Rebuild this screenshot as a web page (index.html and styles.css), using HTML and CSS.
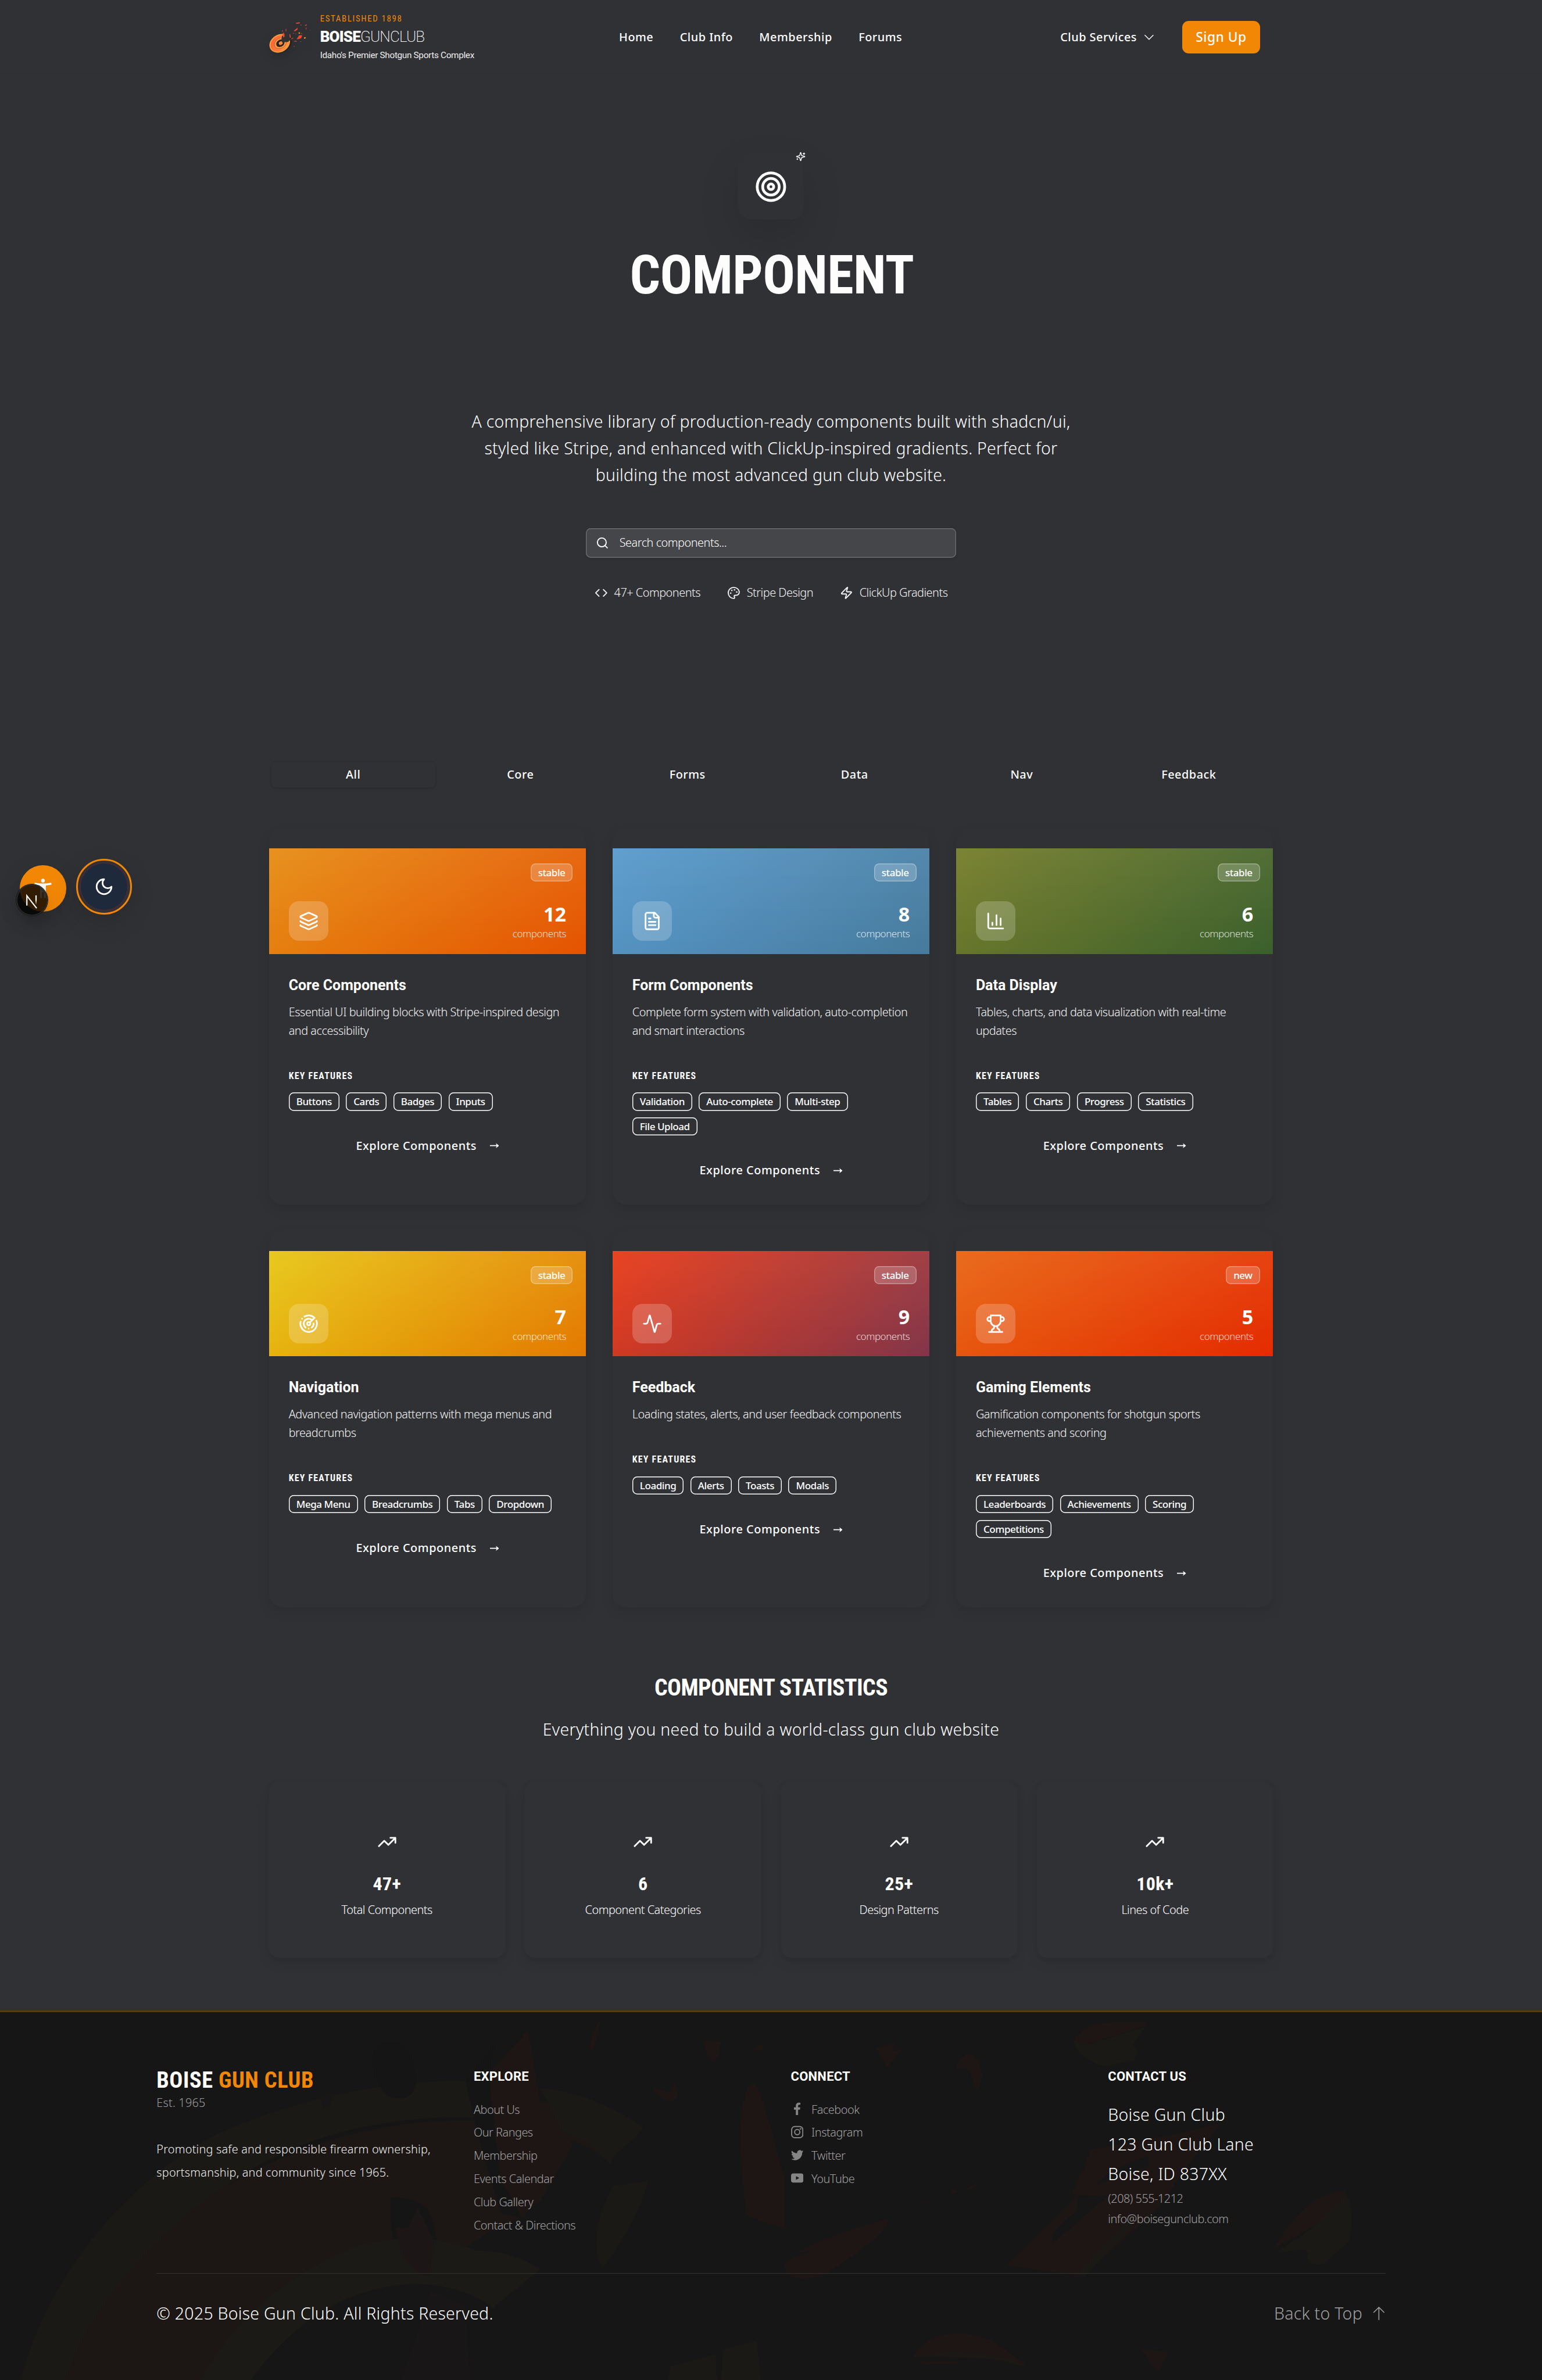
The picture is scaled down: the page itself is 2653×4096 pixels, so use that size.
FILE: index.html
```
<!DOCTYPE html>
<html lang="en">
<head>
<meta charset="utf-8">
<title>Boise Gun Club – Components</title>
<link rel="stylesheet" href="styles.css">
</head>
<body>
<svg class="sprite" aria-hidden="true">
  <symbol id="layers" viewBox="0 0 24 24"><path d="M12.83 2.18a2 2 0 0 0-1.66 0L2.6 6.08a1 1 0 0 0 0 1.83l8.58 3.91a2 2 0 0 0 1.66 0l8.58-3.9a1 1 0 0 0 0-1.83z"/><path d="M2 12a1 1 0 0 0 .58.91l8.6 3.91a2 2 0 0 0 1.65 0l8.58-3.9A1 1 0 0 0 22 12"/><path d="M2 17a1 1 0 0 0 .58.91l8.6 3.91a2 2 0 0 0 1.65 0l8.58-3.9A1 1 0 0 0 22 17"/></symbol>
  <symbol id="file" viewBox="0 0 24 24"><path d="M15 2H6a2 2 0 0 0-2 2v16a2 2 0 0 0 2 2h12a2 2 0 0 0 2-2V7Z"/><path d="M14 2v4a2 2 0 0 0 2 2h4M10 9H8M16 13H8M16 17H8"/></symbol>
  <symbol id="chart" viewBox="0 0 24 24"><path d="M3 3v16a2 2 0 0 0 2 2h16M18 17V9M13 17V5M8 17v-3"/></symbol>
  <symbol id="radar" viewBox="0 0 24 24"><path d="M19.07 4.93A10 10 0 0 0 6.99 3.34M4 6h.01M2.29 9.62A10 10 0 1 0 21.31 8.35M16.24 7.76A6 6 0 1 0 8.23 16.67M12 18h.01M17.99 11.66A6 6 0 0 1 15.77 16.67M13.41 10.59l5.66-5.66"/><circle cx="12" cy="12" r="2"/></symbol>
  <symbol id="activity" viewBox="0 0 24 24"><path d="M22 12h-2.48a2 2 0 0 0-1.93 1.46l-2.35 8.36a.25.25 0 0 1-.48 0L9.24 2.18a.25.25 0 0 0-.48 0l-2.35 8.36A2 2 0 0 1 4.49 12H2"/></symbol>
  <symbol id="trophy" viewBox="0 0 24 24"><path d="M6 9H4.5a2.5 2.5 0 0 1 0-5H6M18 9h1.5a2.5 2.5 0 0 0 0-5H18M4 22h16M10 14.66V17c0 .55-.47.98-.97 1.21C7.85 18.75 7 20.24 7 22M14 14.66V17c0 .55.47.98.97 1.21C16.15 18.75 17 20.24 17 22M18 2H6v7a6 6 0 0 0 12 0V2Z"/></symbol>
  <symbol id="trend" viewBox="0 0 24 24"><path d="M22 7l-8.5 8.5-5-5L2 17M16 7h6v6"/></symbol>
  <symbol id="arrow" viewBox="0 0 11 8"><path d="M0 4h10" fill="none" stroke="currentColor" stroke-width="1.2"/><path d="M7.2 1L11 4 7.2 7l.9-3z" fill="currentColor" stroke="none"/></symbol>
</svg>

<header class="header">
  <div class="container header-row">
    <a class="brand">
      <svg class="brand-mark" viewBox="30 20 300 250">
        <defs><linearGradient id="disc" x1="0" y1="0" x2="1" y2="1"><stop offset="0" stop-color="#ff5f35"/><stop offset=".5" stop-color="#ff7a3c"/><stop offset="1" stop-color="#fba33c"/></linearGradient></defs>
        <g transform="rotate(-32 110 196)">
          <ellipse cx="116" cy="202" rx="80" ry="62" fill="#261f22"/>
          <ellipse cx="108" cy="194" rx="79" ry="63" fill="#f9a13d"/>
          <ellipse cx="109" cy="195" rx="72" ry="56" fill="url(#disc)"/>
          <ellipse cx="112" cy="196" rx="47" ry="36" fill="#fa9a40" stroke="#7b3a22" stroke-width="2"/>
          <ellipse cx="112" cy="196" rx="32" ry="25" fill="#2c2427"/>
          <ellipse cx="115" cy="197" rx="15" ry="12" fill="#f58b3a"/>
        </g>
        <path d="M118 176l44 6 24-10-8-44-20-6-34 20z" fill="#303135"/>
        <path d="M128 180l50-2-12 8-45 2z" fill="#303135"/>
        <g fill="#ee4a30"><path d="M225 46l30-4-4 8-24 4zM289 64l16-7-3 8-10 3zM208 106l28-24v14l-18 11zM295 92l5-11 3 1-5 13zM230 165l18-27 22-2-7 22-22 8zM186 165l18-11 2 5-16 7zM210 178l20 0 2 6-19-2zM178 130l5-2 5 28-8-3zM150 92l4-2 2 15-5 3zM128 124l9-8 6 30-10 8zM124 104l8-4-3 9-5 3zM259 60l5 0 0 6-5-1zM257 180h5v5h-5zM205 120h5v5h-5zM222 124l4 0v5h-4zM209 216l5-2v6h-5zM264 121l5 0 0 5-5 0zM328 98h4v4h-4z"/></g>
        <g fill="#f9a13d"><path d="M242 118l10-2 4 6-8 4zM282 154l12-4 2 7-8 6z"/></g>
      </svg>
      <span class="brand-text">
        <span class="est">ESTABLISHED 1898</span>
        <span class="name"><b>BOISE</b><i>GUNCLUB</i></span>
        <span class="tag">Idaho's Premier Shotgun Sports Complex</span>
      </span>
    </a>
    <nav class="nav"><a>Home</a><a>Club Info</a><a>Membership</a><a>Forums</a></nav>
    <div class="actions">
      <a class="services">Club Services <svg viewBox="0 0 16 16"><path d="M2 5l6 6 6-6"/></svg></a>
      <a class="signup">Sign Up</a>
    </div>
  </div>
</header>

<main>
  <section class="hero">
    <div class="hero-icon">
      <svg class="ico" viewBox="0 0 24 24"><circle cx="12" cy="12" r="10"/><circle cx="12" cy="12" r="6"/><circle cx="12" cy="12" r="2"/></svg>
      <svg class="sparkles" viewBox="0 0 24 24"><path d="M9.937 15.5A2 2 0 0 0 8.5 14.063l-6.135-1.582a.5.5 0 0 1 0-.962L8.5 9.936A2 2 0 0 0 9.937 8.5l1.582-6.135a.5.5 0 0 1 .963 0L14.063 8.5A2 2 0 0 0 15.5 9.937l6.135 1.581a.5.5 0 0 1 0 .964L15.5 14.063a2 2 0 0 0-1.437 1.437l-1.582 6.135a.5.5 0 0 1-.963 0zM20 3v4M22 5h-4M4 17v2M5 18H3"/></svg>
    </div>
    <h1>COMPONENT</h1>
    <p class="lead">A comprehensive library of production-ready components built with shadcn/ui,<br>styled like Stripe, and enhanced with ClickUp-inspired gradients. Perfect for<br>building the most advanced gun club website.</p>
    <div class="search"><svg class="ico" viewBox="0 0 24 24"><circle cx="11" cy="11" r="8"/><path d="M21 21l-4.3-4.3"/></svg><span>Search components...</span></div>
    <ul class="meta">
      <li><svg class="ico" viewBox="0 0 24 24"><path d="M16 18l6-6-6-6M8 6l-6 6 6 6"/></svg>47+ Components</li>
      <li><svg class="ico" viewBox="0 0 24 24"><circle cx="13.5" cy="6.5" r=".5"/><circle cx="17.5" cy="10.5" r=".5"/><circle cx="8.5" cy="7.5" r=".5"/><circle cx="6.5" cy="12.5" r=".5"/><path d="M12 2C6.5 2 2 6.5 2 12s4.5 10 10 10c.926 0 1.648-.746 1.648-1.688 0-.437-.18-.835-.437-1.125-.29-.289-.438-.652-.438-1.125a1.64 1.64 0 0 1 1.668-1.668h1.996c3.051 0 5.555-2.503 5.555-5.554C21.965 6.012 17.461 2 12 2z"/></svg>Stripe Design</li>
      <li><svg class="ico" viewBox="0 0 24 24"><path d="M4 14a1 1 0 0 1-.78-1.63l9.9-10.2a.5.5 0 0 1 .86.46l-1.92 6.02A1 1 0 0 0 13 10h7a1 1 0 0 1 .78 1.63l-9.9 10.2a.5.5 0 0 1-.86-.46l1.92-6.02A1 1 0 0 0 11 14z"/></svg>ClickUp Gradients</li>
    </ul>
  </section>

  <div class="container">
    <nav class="tabs"><a class="active">All</a><a>Core</a><a>Forms</a><a>Data</a><a>Nav</a><a>Feedback</a></nav>

    <section class="cards">
      <article class="card">
        <div class="banner core"><span class="status">stable</span><span class="tile"><svg class="ico"><use href="#layers"/></svg></span><span class="count"><b>12</b>components</span></div>
        <div class="body"><h3>Core Components</h3><p>Essential UI building blocks with Stripe-inspired design<br>and accessibility</p><h4>KEY FEATURES</h4>
        <div class="chips"><span>Buttons</span><span>Cards</span><span>Badges</span><span>Inputs</span></div>
        <a class="explore">Explore Components<svg><use href="#arrow"/></svg></a></div>
      </article>
      <article class="card">
        <div class="banner form"><span class="status">stable</span><span class="tile"><svg class="ico"><use href="#file"/></svg></span><span class="count"><b>8</b>components</span></div>
        <div class="body"><h3>Form Components</h3><p>Complete form system with validation, auto-completion<br>and smart interactions</p><h4>KEY FEATURES</h4>
        <div class="chips"><span>Validation</span><span>Auto-complete</span><span>Multi-step</span><span>File Upload</span></div>
        <a class="explore">Explore Components<svg><use href="#arrow"/></svg></a></div>
      </article>
      <article class="card">
        <div class="banner data"><span class="status">stable</span><span class="tile"><svg class="ico"><use href="#chart"/></svg></span><span class="count"><b>6</b>components</span></div>
        <div class="body"><h3>Data Display</h3><p>Tables, charts, and data visualization with real-time<br>updates</p><h4>KEY FEATURES</h4>
        <div class="chips"><span>Tables</span><span>Charts</span><span>Progress</span><span>Statistics</span></div>
        <a class="explore">Explore Components<svg><use href="#arrow"/></svg></a></div>
      </article>
      <article class="card">
        <div class="banner navi"><span class="status">stable</span><span class="tile"><svg class="ico"><use href="#radar"/></svg></span><span class="count"><b>7</b>components</span></div>
        <div class="body"><h3>Navigation</h3><p>Advanced navigation patterns with mega menus and<br>breadcrumbs</p><h4>KEY FEATURES</h4>
        <div class="chips"><span>Mega Menu</span><span>Breadcrumbs</span><span>Tabs</span><span>Dropdown</span></div>
        <a class="explore">Explore Components<svg><use href="#arrow"/></svg></a></div>
      </article>
      <article class="card">
        <div class="banner feed"><span class="status">stable</span><span class="tile"><svg class="ico"><use href="#activity"/></svg></span><span class="count"><b>9</b>components</span></div>
        <div class="body"><h3>Feedback</h3><p>Loading states, alerts, and user feedback components</p><h4>KEY FEATURES</h4>
        <div class="chips"><span>Loading</span><span>Alerts</span><span>Toasts</span><span>Modals</span></div>
        <a class="explore">Explore Components<svg><use href="#arrow"/></svg></a></div>
      </article>
      <article class="card">
        <div class="banner game"><span class="status">new</span><span class="tile"><svg class="ico"><use href="#trophy"/></svg></span><span class="count"><b>5</b>components</span></div>
        <div class="body"><h3>Gaming Elements</h3><p>Gamification components for shotgun sports<br>achievements and scoring</p><h4>KEY FEATURES</h4>
        <div class="chips"><span>Leaderboards</span><span>Achievements</span><span>Scoring</span><span>Competitions</span></div>
        <a class="explore">Explore Components<svg><use href="#arrow"/></svg></a></div>
      </article>
    </section>

    <section class="stats">
      <h2>COMPONENT STATISTICS</h2>
      <p>Everything you need to build a world-class gun club website</p>
      <div class="stat-grid">
        <div class="stat"><svg class="ico"><use href="#trend"/></svg><b>47+</b><span>Total Components</span></div>
        <div class="stat"><svg class="ico"><use href="#trend"/></svg><b>6</b><span>Component Categories</span></div>
        <div class="stat"><svg class="ico"><use href="#trend"/></svg><b>25+</b><span>Design Patterns</span></div>
        <div class="stat"><svg class="ico"><use href="#trend"/></svg><b>10k+</b><span>Lines of Code</span></div>
      </div>
    </section>
  </div>
</main>

<footer class="footer">
  <svg class="footer-art" viewBox="0 0 3734 891" preserveAspectRatio="xMinYMin slice">
    <g transform="scale(1.2117 .59) translate(0 -56)">
      <path d="M40 1570C90 1180 230 780 430 560C600 400 800 330 930 340L1280 530C1250 600 1220 650 1220 682C1190 620 1150 580 1100 560L1145 600L1080 830L1040 900L975 960L900 1065L1080 1110L985 1268C940 1200 880 1170 820 1172C660 1190 560 1400 500 1570Z" fill="#1e1815"/>
      <path d="M40 1570C90 1180 230 780 430 560C600 400 800 330 930 340L950 490C820 470 640 540 520 680C350 880 190 1200 130 1570Z" fill="#1c1a16"/>
      <path d="M450 775C570 590 740 480 950 488V500C760 492 590 600 450 775ZM780 820C800 810 850 830 858 880C880 980 880 1100 858 1150C830 1160 800 1120 795 1060C780 980 780 900 780 820ZM930 340L990 180L975 300L1000 560L1040 900L1000 880L960 600Z" fill="#151516"/>
      <path d="M400 1570C460 1340 560 1140 720 1010C800 970 900 980 950 1035C1000 1030 1050 1070 1080 1110L985 1268C940 1200 880 1170 820 1172C660 1190 560 1400 500 1570Z" fill="#1d1b16"/>
      <path d="M835 860L868 1000L858 1140C830 1130 800 1080 790 940L815 940Z" fill="#1e1816"/>
      <path d="M1080 368C1160 380 1240 460 1285 530C1265 600 1225 620 1220 682C1190 600 1150 560 1125 548Z" fill="#1d1a16"/>
      <path d="M1055 130L980 300V380L1000 740L1045 905L1145 600L1080 440Z" fill="#211615"/>
      <path d="M745 250C745 150 800 160 822 240L832 330C830 400 810 420 780 405C760 380 745 330 745 250Z" fill="#151516"/>
      <path d="M1407 172L1442 176L1435 235L1425 262L1412 230ZM1500 212L1525 190L1520 214ZM1303 365L1340 385L1348 348L1355 390C1350 440 1325 430 1303 365ZM1478 580C1480 450 1490 350 1505 348C1525 360 1545 600 1568 730V945L1490 890ZM1178 210L1182 150L1200 75L1198 110L1186 205Z" fill="#211615"/>
      <path d="M1340 1510L1430 1460L1432 1570H1336ZM1445 1440L1512 1405L1520 1570H1440ZM1225 770L1295 750C1280 880 1230 1040 1205 1105C1180 1040 1190 900 1225 770Z" fill="#1c1a15"/>
      <path d="M640 400L665 385L660 450L645 450ZM860 1200L930 1260L940 1570H800L830 1400Z" fill="#191616"/>
    </g>
    <g transform="translate(1834 0) scale(1.2117 .59) translate(0 -56)">
      <path d="M0 360C20 500 30 700 55 945L0 910ZM0 190L15 195L5 215H0ZM237 205L275 182L268 220L290 205L260 284ZM398 290C400 230 430 200 442 260C455 310 445 360 438 375C425 330 430 270 398 290ZM75 1050C120 990 210 930 260 905C265 960 170 1090 130 1135C90 1165 50 1150 55 1090C60 1070 80 1055 75 1050ZM925 512L880 630L800 860L650 1140L497 1095L630 830L665 620L830 560ZM624 815L652 690L640 790ZM1032 1027C1060 920 1110 790 1175 792L1165 870ZM310 1475C330 1400 370 1360 430 1380L470 1405L536 1502L470 1480L340 1470ZM325 1490L400 1490L405 1497L330 1502ZM765 1438L822 1450L800 1535ZM328 832L336 825L333 838ZM383 800L398 776V798ZM408 797L440 752L436 775Z" fill="#211615"/>
      <path d="M632 175C650 90 700 95 778 97L770 115L655 190Z" fill="#211615"/>
      <path d="M632 172L655 192L776 115L750 190L760 215L752 255L693 277C660 260 635 220 632 172ZM1040 1040C1070 990 1140 920 1175 800C1190 850 1190 950 1180 1000L1130 1092C1100 1095 1095 1070 1100 1050L1095 1030ZM340 1470C370 1440 420 1450 505 1480L536 1505L525 1507C480 1475 420 1470 340 1470ZM740 910L750 930L655 1140L640 1130Z" fill="#1d1a15"/>
      <path d="M675 770C690 720 740 670 782 645L780 690ZM640 808L700 810L590 1005C580 980 600 930 640 870ZM74 1048L105 1035L100 1045L75 1062Z" fill="#161616"/>
    </g>
  </svg>
  <div class="footer-inner">
    <div class="footer-cols">
      <div>
        <p class="footer-brand">BOISE <em>GUN CLUB</em></p>
        <p class="since">Est. 1965</p>
        <p class="mission">Promoting safe and responsible firearm ownership,<br>sportsmanship, and community since 1965.</p>
      </div>
      <div>
        <h5>EXPLORE</h5>
        <ul class="links"><li>About Us</li><li>Our Ranges</li><li>Membership</li><li>Events Calendar</li><li>Club Gallery</li><li>Contact &amp; Directions</li></ul>
      </div>
      <div>
        <h5>CONNECT</h5>
        <ul class="links social">
          <li><svg viewBox="0 0 16 16"><path d="M6.2 16V9H3.8V6.1h2.4V4C6.2 1.5 7.6 0 10.1 0c1.1 0 1.9.1 1.9.1v2.6h-1.2C9.5 2.7 9.1 3.4 9.1 4.2v1.9h2.8L11.5 9H9.1v7z"/></svg>Facebook</li>
          <li><svg viewBox="0 0 16 16" class="line"><rect x=".8" y=".8" width="14.4" height="14.4" rx="4"/><circle cx="8" cy="8" r="3.4"/><circle cx="12.2" cy="3.8" r=".4"/></svg>Instagram</li>
          <li><svg viewBox="0 0 16 16"><path d="M5.026 15c6.038 0 9.341-5.003 9.341-9.334q.002-.211-.006-.422A6.7 6.7 0 0 0 16 3.542a6.7 6.7 0 0 1-1.889.518 3.3 3.3 0 0 0 1.447-1.817 6.5 6.5 0 0 1-2.087.793A3.286 3.286 0 0 0 7.875 6.03a9.32 9.32 0 0 1-6.767-3.429 3.29 3.29 0 0 0 1.018 4.382A3.3 3.3 0 0 1 .64 6.575v.045a3.29 3.29 0 0 0 2.632 3.218 3.2 3.2 0 0 1-.865.115 3 3 0 0 1-.614-.057 3.28 3.28 0 0 0 3.067 2.277A6.6 6.6 0 0 1 .78 13.58a6 6 0 0 1-.78-.045A9.34 9.34 0 0 0 5.026 15"/></svg>Twitter</li>
          <li><svg viewBox="0 0 16 16"><path fill-rule="evenodd" d="M3 2h10a3 3 0 0 1 3 3v6a3 3 0 0 1-3 3H3a3 3 0 0 1-3-3V5a3 3 0 0 1 3-3zm3.4 3.6v4.8L10.6 8z"/></svg>YouTube</li>
        </ul>
      </div>
      <div class="contact">
        <h5>CONTACT US</h5>
        <address>Boise Gun Club<br>123 Gun Club Lane<br>Boise, ID 837XX</address>
        <p>(208) 555-1212</p>
        <p>info@boisegunclub.com</p>
      </div>
    </div>
    <div class="footer-bottom">
      <p>© 2025 Boise Gun Club. All Rights Reserved.</p>
      <a>Back to Top <svg viewBox="0 0 16 16"><path d="M8 16V1M1.5 7L8 .7 14.5 7"/></svg></a>
    </div>
  </div>
</footer>

<div class="float access"><svg viewBox="0 0 24 24"><path d="M20.5 6c-2.61.7-5.67 1-8.5 1s-5.89-.3-8.5-1L3 8c1.86.5 4 .83 6 1v13h2v-6h2v6h2V9c2-.17 4.14-.5 6-1l-.5-2zM12 6c1.1 0 2-.9 2-2s-.9-2-2-2-2 .9-2 2 .9 2 2 2z"/></svg></div>
<div class="float dark"><span><svg class="ico" viewBox="0 0 24 24"><path d="M12 3a6 6 0 0 0 9 9 9 9 0 1 1-9-9Z"/></svg></span></div>
<div class="float dev"><svg viewBox="0 0 40 40"><defs><linearGradient id="fade" x1="0" y1="0" x2="0" y2="1"><stop offset=".5" stop-color="#fff"/><stop offset="1" stop-color="#fff" stop-opacity="0"/></linearGradient></defs><path d="M13.5 27V14.5L26 30.5" fill="none" stroke="#fff" stroke-width="1.6"/><path d="M24.4 14h1.6v12h-1.6z" fill="url(#fade)"/></svg></div>
</body>
</html>
```
FILE: styles.css
```
/* 1rem equals ten layout units */
html { font-size: 14.21px; }
* { box-sizing: border-box; margin: 0; padding: 0; }
body {
  position: relative;
  height: 4096px;
  overflow: hidden;
  display: flex;
  flex-direction: column;
  background: #303135;
  color: #fff;
  font: 300 1.4rem/2.2rem "Noto Sans", sans-serif;
  letter-spacing: -.025em;
}
ul { list-style: none; }
.sprite { display: none; }
.ico { fill: none; stroke: currentColor; stroke-width: 2; stroke-linecap: round; stroke-linejoin: round; }
.container { width: 121.6rem; margin: 0 auto; }
h1, h2, h3, h4, h5, .footer-brand, .stat b, .brand-text { font-family: Roboto, sans-serif; font-weight: 700; }

/* header */
.header { height: 9rem; flex: none; border-bottom: 1px solid #2e2f32; }
.header-row { height: 9rem; display: flex; align-items: center; padding-right: 1.6rem; font-weight: 500; letter-spacing: .025em; }
.brand { width: 42.4rem; display: flex; align-items: center; gap: 1.2rem; }
.brand-mark { width: 5rem; height: 4.17rem; flex: none; margin-top: -.15rem; filter: drop-shadow(0 .5rem .6rem rgba(0, 0, 0, .15)); }
.brand-text { display: flex; flex-direction: column; white-space: nowrap; }
.est { font-size: 1.05rem; line-height: 1.6rem; font-weight: 400; font-stretch: 75%; letter-spacing: .11em; color: #f28705; }
.name { font-size: 1.83rem; line-height: 2.8rem; letter-spacing: -.032em; }
.name i { font-style: normal; font-weight: 200; }
.tag { font-size: 1.08rem; line-height: 1.6rem; font-weight: 400; letter-spacing: -.0215em; color: #eee; }
.nav { display: flex; gap: 3.2rem; }
.actions { margin-left: auto; display: flex; align-items: center; gap: 3.3rem; }
.services { display: flex; align-items: center; gap: .8rem; }
.services svg { width: 1.4rem; height: 1.4rem; fill: none; stroke: #fff; stroke-width: 1.1; }
.signup { width: 9.4rem; height: 4rem; border-radius: .8rem; background: #f28705; font-size: 1.6rem; line-height: 4rem; text-align: center; }

/* hero */
.hero { display: flex; flex-direction: column; align-items: center; padding-top: 9.6rem; text-align: center; }
.hero-icon { position: relative; width: 8rem; height: 8rem; border-radius: 1.6rem; display: flex; align-items: center; justify-content: center; background: #303135; box-shadow: 0 2rem 5rem rgba(0, 0, 0, .12); }
.hero-icon .ico { width: 4rem; height: 4rem; }
.sparkles { position: absolute; top: -.2rem; right: -.2rem; width: 1.2rem; height: 1.2rem; fill: none; stroke: #fff; stroke-width: 2; stroke-linecap: round; }
h1 { margin-top: 2.86rem; padding-left: .2rem; font-size: 6.51rem; line-height: 7.8rem; font-stretch: 75%; letter-spacing: -.007em; color: #fdfdfd; }
.lead { margin-top: 12.13rem; font-size: 2rem; line-height: 3.25rem; letter-spacing: .01em; white-space: nowrap; }
.search { width: 44.8rem; height: 3.6rem; margin-top: 4.8rem; padding: 0 1.2rem; display: flex; align-items: center; gap: 1.25rem; background: #454649; border-radius: .6rem; box-shadow: inset 0 0 0 1.42px #6a6b6e, 0 .1rem .3rem rgba(0, 0, 0, .1); }
.search .ico, .meta .ico { width: 1.6rem; height: 1.6rem; flex: none; }
.meta { display: flex; gap: 3.2rem; margin-top: 3.2rem; line-height: 2.1rem; }
.meta li { display: flex; align-items: center; gap: .8rem; white-space: nowrap; color: #f4f4f4; }

/* tabs */
.tabs { height: 3.6rem; margin: 19.1rem 0 4.8rem; padding: .3rem; display: grid; grid-template-columns: repeat(6, 1fr); gap: .4rem; font-weight: 500; letter-spacing: .025em; text-align: center; line-height: 3.1rem; }
.tabs .active { border-radius: .6rem; box-shadow: 0 .2rem .4rem rgba(0, 0, 0, .11), 0 0 .3rem rgba(0, 0, 0, .05); }

/* component cards */
.cards { display: grid; grid-template-columns: repeat(3, 38.4rem); gap: 3.2rem; }
.card { height: 45.55rem; padding-top: 2.4rem; border-radius: 1.6rem; background: #303135; box-shadow: 0 .6rem 1.4rem rgba(0, 0, 0, .1); }
.banner { position: relative; height: 12.8rem; padding: 0 2.4rem 1.6rem; display: flex; align-items: flex-end; justify-content: space-between; }
.core { background: linear-gradient(to top, transparent, rgba(255, 255, 255, .05)), linear-gradient(135deg, #e68c14, #e55300); }
.form { background: linear-gradient(to top, transparent, rgba(255, 255, 255, .05)), linear-gradient(135deg, #589acd, #467a9c); }
.data { background: linear-gradient(to top, transparent, rgba(255, 255, 255, .05)), linear-gradient(135deg, #757d2a, #3a5f2c); }
.navi { background: linear-gradient(to top, transparent, rgba(255, 255, 255, .05)), linear-gradient(135deg, #e7c614, #e47900); }
.feed { background: linear-gradient(to top, transparent, rgba(255, 255, 255, .05)), linear-gradient(135deg, #e93a17, #823549); }
.game { background: linear-gradient(to top, transparent, rgba(255, 255, 255, .05)), linear-gradient(135deg, #e86412, #e42b00); }
.status, .chips span { height: 2.2rem; padding: 0 .92rem; border-radius: .6rem; box-shadow: inset 0 0 0 1.42px #fff; font-size: 1.2rem; line-height: 2.2rem; font-weight: 500; letter-spacing: -.027em; }
.status { position: absolute; top: 1.84rem; right: 1.6rem; background: rgba(255, 255, 255, .2); box-shadow: inset 0 0 0 1.42px rgba(255, 255, 255, .3); }
.tile { width: 4.8rem; height: 4.8rem; border-radius: 1.2rem; display: flex; align-items: center; justify-content: center; background: rgba(255, 255, 255, .2); }
.tile .ico { width: 2.4rem; height: 2.4rem; }
.count { display: flex; flex-direction: column; align-items: flex-end; font-size: 1.2rem; line-height: 1.6rem; color: rgba(255, 255, 255, .8); }
.count b { font-size: 2.4rem; line-height: 3.2rem; font-weight: 700; letter-spacing: 0; color: #fff; }
.body { padding: 2.6rem 2.4rem 0; }
h3 { font-size: 1.76rem; line-height: 2.4rem; letter-spacing: 0; }
.body p { margin-top: .9rem; line-height: 2.26rem; letter-spacing: -.023em; white-space: nowrap; color: #f4f4f4; }
h4 { margin-top: 3.58rem; font-size: 1.12rem; line-height: 1.6rem; font-stretch: 75%; letter-spacing: .078em; }
.chips { margin-top: 1.2rem; display: flex; flex-wrap: wrap; gap: .8rem; }
.explore { height: 3.6rem; margin-top: 2.4rem; display: flex; align-items: center; justify-content: center; gap: 1.6rem; font-weight: 500; letter-spacing: .027em; }
.explore svg { width: 1.1rem; height: .8rem; margin-top: .1rem; }

/* statistics */
.stats { text-align: center; }
h2 { margin-top: 8rem; font-size: 2.8rem; line-height: 3.6rem; font-stretch: 75%; letter-spacing: -.015em; }
.stats p { margin: 1.68rem 0 4.7rem; font-size: 2rem; line-height: 3.2rem; letter-spacing: .01em; }
.stat-grid { display: grid; grid-template-columns: repeat(4, 1fr); gap: 2.4rem; }
.stat { height: 21.27rem; padding-top: 6.06rem; display: flex; flex-direction: column; align-items: center; border-radius: 1.2rem; box-shadow: 0 .8rem 1.5rem -.2rem rgba(0, 0, 0, .1), 0 0 1rem rgba(0, 0, 0, .03); }
.stat .ico { width: 2.4rem; height: 2.4rem; flex: none; }
.stat b { margin: 2.32rem 0 .4rem; font-size: 2.25rem; line-height: 3.2rem; font-stretch: 75%; letter-spacing: .01em; }

/* footer */
.footer { position: relative; flex: 1; margin-top: 6.4rem; border-top: 3px solid #593a10; background: #161616; overflow: hidden; }
.footer-art { position: absolute; inset: 0; width: 100%; height: 100%; opacity: .8; }
.footer-inner { position: relative; width: 148.8rem; margin: 0 auto; padding-top: 6.6rem; }
.footer-cols { height: 25.04rem; display: grid; grid-template-columns: repeat(4, 33.6rem); gap: 4.8rem; white-space: nowrap; }
.footer-brand { font-size: 2.7rem; line-height: 3.2rem; font-stretch: 75%; letter-spacing: .014em; }
.footer-brand em { font-style: normal; color: #f28705; }
.since { margin: .1rem 0 3.12rem; letter-spacing: .01em; color: #9f9f9f; }
.mission { line-height: 2.8rem; letter-spacing: .01em; color: #f0f0f0; }
h5 { margin-bottom: 1.4rem; font-size: 1.55rem; line-height: 2.4rem; letter-spacing: .01em; }
.links { line-height: 2.8rem; color: #a0a0a0; }
.social li { display: flex; align-items: center; gap: 1rem; }
.social svg { width: 1.5rem; height: 1.6rem; margin-top: -.2rem; fill: #858585; }
.social .line { fill: none; stroke: #858585; stroke-width: 1.5; }
address { margin-top: 1.64rem; font-style: normal; font-size: 2rem; line-height: 3.6rem; letter-spacing: .01em; }
.contact p { line-height: 2.4rem; color: #a0a0a0; }
.footer-bottom { padding-top: 3rem; border-top: 1px solid #333231; display: flex; justify-content: space-between; font-size: 2rem; line-height: 3.6rem; letter-spacing: .01em; }
.footer-bottom a { display: flex; align-items: center; gap: 1.2rem; color: #a0a0a0; }
.footer-bottom svg { width: 1.6rem; height: 1.6rem; fill: none; stroke: #a0a0a0; stroke-width: 1.1; }

/* floating controls over the page */
.float { position: absolute; display: flex; align-items: center; justify-content: center; border-radius: 50%; }
.access { left: 2.4rem; top: 104.8rem; width: 5.6rem; height: 5.6rem; background: #f28705; box-shadow: 0 1rem 3rem rgba(0, 0, 0, .14); }
.access svg { width: 2.8rem; height: 2.8rem; fill: #fff; }
.dark { left: 9.2rem; top: 104rem; width: 6.8rem; height: 6.8rem; border: 3px solid #f28705; box-shadow: 0 1rem 3rem rgba(0, 0, 0, .14); }
.dark span { width: 5.9rem; height: 5.9rem; border-radius: 50%; border: 2px solid #452b33; background: #1e293b; display: flex; align-items: center; justify-content: center; }
.dark .ico { width: 2.4rem; height: 2.4rem; }
.dev { left: 1.94rem; top: 107.1rem; width: 3.8rem; height: 3.8rem; background: rgba(0, 0, 0, .8); border: 2px solid #252626; box-shadow: 0 0 0 1px #171717, 0 1rem 2rem rgba(0, 0, 0, .15); }
.dev svg { width: 3.8rem; height: 3.8rem; flex: none; }
```
